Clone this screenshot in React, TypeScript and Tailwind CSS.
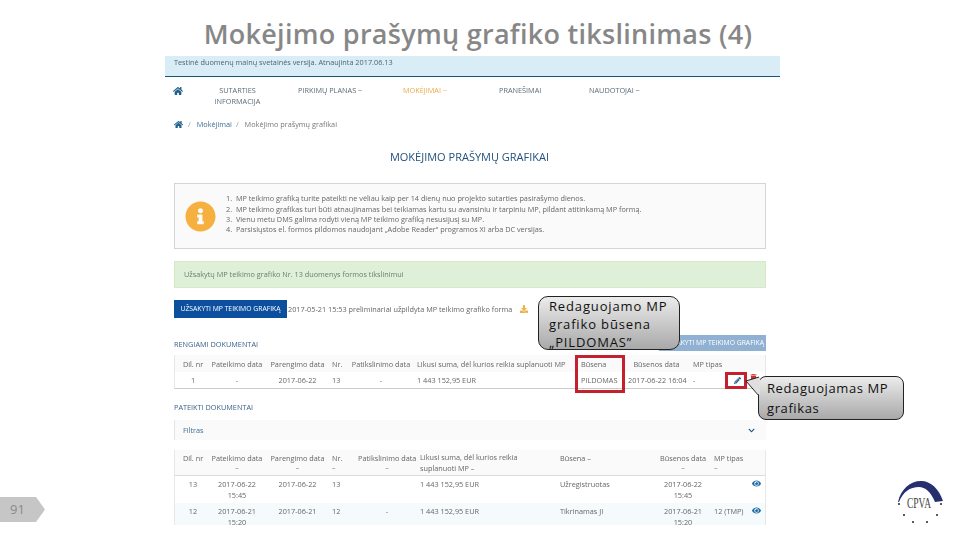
import { FaHome, FaInfoCircle, FaPencilAlt, FaTrash, FaEye, FaChevronDown, FaDownload } from "react-icons/fa";

const cols1 = "grid-cols-[36px_52px_69px_19px_66px_164px_47px_65px_41px_1fr]";
const cols2 = "grid-cols-[36px_52px_69px_26px_62px_140px_100px_54px_34px_1fr]";

const lines = [
  "MP teikimo grafiką turite pateikti ne vėliau kaip per 14 dienų nuo projekto sutarties pasirašymo dienos.",
  "MP teikimo grafikas turi būti atnaujinamas bei teikiamas kartu su avansiniu ir tarpiniu MP, pildant atitinkamą MP formą.",
  "Vienu metu DMS galima rodyti vieną MP teikimo grafiką nesusijusį su MP.",
  "Parsisiųstos el. formos pildomos naudojant „Adobe Reader“ programos XI arba DC versijas.",
];

function SortMark() {
  return <div className="text-[7px] leading-[9px] text-[#777]">–</div>;
}

function Callout1() {
  return (
    <div className="absolute left-[538px] top-[296px] w-[142px] h-[54px] rounded-[10px] border border-[#222] bg-gradient-to-b from-[#ececec] to-[#a9a9a9] pl-[10px] text-[13px] leading-[18px] tracking-[0.85px] text-[#111] font-['Open_Sans',sans-serif]">
      <div>Redaguojamo MP</div>
      <div>grafiko būsena</div>
      <div>„PILDOMAS”</div>
    </div>
  );
}

function Callout2() {
  return (
    <>
      <div className="absolute left-[758px] top-[376px] w-[146px] h-[44px] rounded-[8px] border border-[#222] bg-gradient-to-b from-[#ececec] to-[#a9a9a9] pl-[8px] pt-[1px] text-[13px] leading-[20px] tracking-[0.6px] text-[#111] font-['Open_Sans',sans-serif]">
        <div>Redaguojamas MP</div>
        <div>grafikas</div>
      </div>
      <svg className="absolute left-[744px] top-[376px]" width="17" height="22" viewBox="0 0 17 22">
        <path d="M16 1 L2 5 L16 20 Z" fill="#dfdfdf" />
        <path d="M15 1 L2 5 L15 20" fill="none" stroke="#222" strokeWidth="1" />
      </svg>
    </>
  );
}

function Logo() {
  return (
    <svg className="absolute left-[892px] top-[478px]" width="56" height="48" viewBox="0 0 56 48">
      <path d="M6 24 C9 11 18 3 29 3 C39 3 47 11 51 23 L43 24 C39 14 33 9 27 9 C18 9 11 14 7 24 Z" fill="#27306f" />
      <text x="27" y="30" textAnchor="middle" fontFamily="Liberation Serif, serif" fontSize="14" fill="#444" textLength="24" lengthAdjust="spacingAndGlyphs">CPVA</text>
      {[[7, 26], [12, 37], [21, 44], [35, 44], [45, 37], [49, 26]].map(([x, y], i) => (
        <circle key={i} cx={x} cy={y} r="1.1" fill="#333" />
      ))}
    </svg>
  );
}

export default function App() {
  return (
    <div className="relative w-[960px] h-[540px] overflow-hidden bg-white font-['Open_Sans',sans-serif]">
      <h1 className="h-[56px] pt-[14px] text-center text-[27px] leading-[40px] font-semibold text-[#878787] pr-[4px] tracking-[0.28px]">
        Mokėjimo prašymų grafiko tikslinimas (4)
      </h1>

      <div className="ml-[165px] w-[615px] h-[469px] overflow-hidden text-[7.3px] text-[#666] blur-[0.35px]">
        <div className="h-[21px] bg-[#d9edf7] border-b border-[#17557d] pl-[9px] pt-[1px] leading-[11px] text-[#4d6470]">
          Testinė duomenų mainų svetainės versija. Atnaujinta 2017.06.13
        </div>

        <div className="h-[39px] pt-[8px] pl-[8px] flex items-start leading-[11px] text-[#5a6b78]">
          <FaHome className="text-[#1f5f8b] text-[10px] mt-[0.5px]" />
          <div className="ml-[30px] w-[49px] text-center">SUTARTIES INFORMACIJA</div>
          <div className="ml-[36px] w-[66px] whitespace-nowrap">PIRKIMŲ PLANAS ~</div>
          <div className="ml-[39px] w-[47px] whitespace-nowrap text-[#eda94a]">MOKĖJIMAI ~</div>
          <div className="ml-[49px] w-[46px] whitespace-nowrap">PRANEŠIMAI</div>
          <div className="ml-[44px] whitespace-nowrap">NAUDOTOJAI ~</div>
        </div>

        <div className="h-[17px] pl-[9px] flex items-center gap-[4px] leading-[11px] whitespace-nowrap">
          <FaHome className="text-[#1f5f8b] text-[9px]" />
          <span className="text-[#999] ml-[1px]">/</span>
          <span className="text-[#3e6f95] ml-[2px]">Mokėjimai</span>
          <span className="text-[#999]">/</span>
          <span className="ml-[2px] text-[#777]">Mokėjimo prašymų grafikai</span>
        </div>

        <div className="h-[50px] pt-[17px] text-center text-[11px] leading-[14px] text-[#22527c] pr-[6px]">
          MOKĖJIMO PRAŠYMŲ GRAFIKAI
        </div>

        <div className="ml-[9px] w-[592px] h-[66px] bg-[#fafafa] border border-[#d4d4d4] flex items-center pl-[10px] pb-[4px]">
          <FaInfoCircle className="text-[#f5b040] text-[31px] shrink-0 mt-[4px]" />
          <ol className="ml-[10px] leading-[10.4px] text-[#666]">
            {lines.map((l, i) => (
              <li key={i} className="whitespace-nowrap">
                {i + 1}.&nbsp;&nbsp;{l}
              </li>
            ))}
          </ol>
        </div>

        <div className="ml-[9px] mt-[12px] w-[592px] h-[27px] bg-[#dff0d8] border border-[#d6e9c6] flex items-center pl-[9px] text-[#6b7f68]">
          Užsakytų MP teikimo grafiko Nr. 13 duomenys formos tikslinimui
        </div>

        <div className="ml-[9px] mt-[12px] h-[18px] flex items-center">
          <div className="w-[113px] h-[18px] bg-[#0b4f9e] text-white flex items-center justify-center whitespace-nowrap text-[6.8px]">
            UŽSAKYTI MP TEIKIMO GRAFIKĄ
          </div>
          <div className="ml-[1px] whitespace-nowrap text-[#666]">2017-05-21 15:53 preliminariai užpildyta MP teikimo grafiko forma</div>
          <FaDownload className="ml-[8px] text-[#efb04a] text-[8px]" />
        </div>

        <div className="ml-[9px] mt-[17px] w-[592px] h-[20px] flex justify-between">
          <span className="mt-[4px] leading-[11px] text-[#39618a]">RENGIAMI DOKUMENTAI</span>
          <span className="w-[107px] h-[16px] bg-[#91b1d3] text-white text-[6.8px] leading-[16px] text-right pr-[2px] whitespace-nowrap overflow-hidden">
            UŽSAKYTI MP TEIKIMO GRAFIKĄ
          </span>
        </div>

        <div className="ml-[9px] w-[592px] border-x border-b border-[#e8e8e8] border-b-[#ccc]">
          <div className={`grid ${cols1} h-[17px] pt-[2px] items-center bg-[#fafafa] text-center whitespace-nowrap`}>
            <div>Dil. nr</div>
            <div>Pateikimo data</div>
            <div>Parengimo data</div>
            <div className="text-left">Nr.</div>
            <div className="pr-[6px]">Patikslinimo data</div>
            <div className="text-left">Likusi suma, dėl kurios reikia suplanuoti MP</div>
            <div className="text-left">Būsena</div>
            <div className="pr-[8px]">Būsenos data</div>
            <div className="text-left">MP tipas</div>
            <div />
          </div>
          <div className={`grid ${cols1} h-[16px] items-center text-center whitespace-nowrap`}>
            <div>1</div>
            <div>-</div>
            <div>2017-06-22</div>
            <div className="text-left">13</div>
            <div className="pr-[6px]">-</div>
            <div className="text-left">1 443 152,95 EUR</div>
            <div className="text-left">PILDOMAS</div>
            <div className="pr-[8px]">2017-06-22 16:04</div>
            <div className="text-left">-</div>
            <div className="flex items-start gap-[9px] h-[16px] pt-[1px]">
              <FaPencilAlt className="text-[#1f5f8b] text-[7px] mt-[4px]" />
              <FaTrash className="text-[#c9302c] text-[7px] mt-[1px]" />
            </div>
          </div>
        </div>

        <div className="ml-[9px] mt-[13px] h-[11px] leading-[11px] text-[#39618a]">PATEIKTI DOKUMENTAI</div>

        <div className="ml-[9px] mt-[7px] w-[592px] h-[20px] bg-[#fafafa] border-l border-[#e4e4e4] flex items-center justify-between pl-[8px] pr-[11px] text-[#3e6f95]">
          <span>Filtras</span>
          <FaChevronDown className="text-[#1f4e79] text-[7px]" />
        </div>

        <div className="ml-[9px] mt-[10px] w-[592px] border-x border-[#e8e8e8]">
          <div className={`grid ${cols2} h-[26px] items-center bg-[#fafafa] border-b border-[#ddd] text-center leading-[10.5px] whitespace-nowrap`}>
            <div className="self-start pt-[3px]">Dil. nr</div>
            <div>Pateikimo data<SortMark /></div>
            <div>Parengimo data<SortMark /></div>
            <div className="text-left">Nr.<SortMark /></div>
            <div className="pr-[4px]">Patikslinimo data<SortMark /></div>
            <div className="text-left">Likusi suma, dėl kurios reikia<br />suplanuoti MP –</div>
            <div className="text-left self-start pt-[3px]">Būsena –</div>
            <div className="pr-[8px]">Būsenos data<SortMark /></div>
            <div className="text-left">MP tipas<SortMark /></div>
            <div />
          </div>
          <div className={`grid ${cols2} h-[27px] pt-[3px] items-start text-center leading-[11px]`}>
            <div>13</div>
            <div>2017-06-22 15:45</div>
            <div>2017-06-22</div>
            <div className="text-left">13</div>
            <div />
            <div className="text-left">1 443 152,95 EUR</div>
            <div className="text-left">Užregistruotas</div>
            <div className="pr-[8px]">2017-06-22 15:45</div>
            <div />
            <div className="flex justify-end pr-[4px]"><FaEye className="text-[#1f6aa5] text-[9px]" /></div>
          </div>
          <div className={`grid ${cols2} h-[27px] pt-[3px] items-start text-center leading-[11px] bg-[#f5fafd]`}>
            <div>12</div>
            <div>2017-06-21 15:20</div>
            <div>2017-06-21</div>
            <div className="text-left">12</div>
            <div className="pr-[4px]">-</div>
            <div className="text-left">1 443 152,95 EUR</div>
            <div className="text-left">Tikrinamas JI</div>
            <div className="pr-[8px]">2017-06-21 15:20</div>
            <div className="text-left whitespace-nowrap">12 (TMP)</div>
            <div className="flex justify-end pr-[4px]"><FaEye className="text-[#1f6aa5] text-[9px]" /></div>
          </div>
        </div>
      </div>

      <div className="absolute left-[575px] top-[355px] w-[50px] h-[38px] border-[3px] border-[#c4202e]" />
      <div className="absolute left-[725px] top-[372px] w-[22px] h-[17px] border-[3px] border-[#c4202e]" />
      <Callout1 />
      <Callout2 />

      <div className="absolute left-0 top-[497px] w-[45px] h-[25px] bg-[#c6c6c6] [clip-path:polygon(0_0,36px_0,100%_50%,36px_100%,0_100%)] pl-[10px] text-[13px] leading-[25px] text-[#8a8a8a]">
        91
      </div>
      <Logo />
    </div>
  );
}
